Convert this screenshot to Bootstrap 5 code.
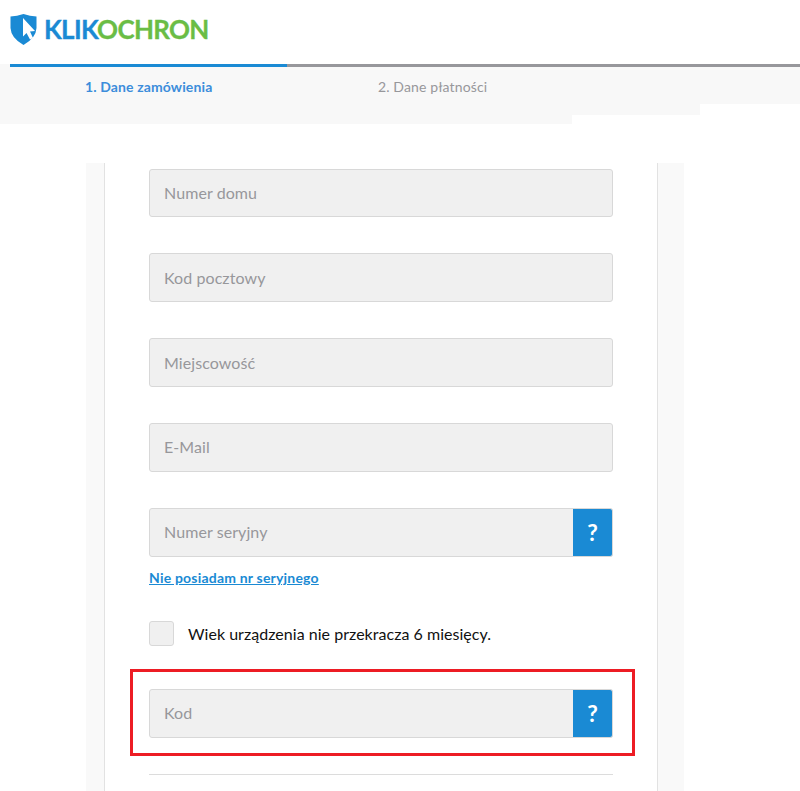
<!DOCTYPE html>
<html lang="pl">
<head>
    <meta charset="UTF-8">
    <title>Klikochron</title>
    <meta name="viewport" content="width=device-width, initial-scale=1">
    <link href="https://cdn.jsdelivr.net/npm/bootstrap@5.3.3/dist/css/bootstrap.min.css" rel="stylesheet">
    <style>
        html, body { height: 791px; overflow: hidden; }
        body { font-family: "Lato", "Liberation Sans", sans-serif; color: #111; background: #fff; }
        .logo-bar { height: 64px; padding: 14px 0 0 10px; }
        .logo-text { font-size: 26px; font-weight: 700; line-height: 31px; letter-spacing: -.7px; margin-left: 7px; -webkit-text-stroke: .3px; }
        .logo-blue { color: #1a8ad4; }
        .logo-green { color: #6abd45; }
        .steps-bar { height: 3px; background: #f8f8f8; padding-left: 10px; }
        .steps-track { height: 3px; background: #97979b; }
        .steps-done { width: 277px; height: 3px; background: #1a8ad4; }
        .band-top { height: 37px; background: #f8f8f8; font-size: 14px; padding-top: 10px; line-height: 20px; letter-spacing: .12px; }
        .step-active { width: 378px; padding-left: 85px; color: #3c8ddb; font-weight: 700; }
        .step-next { color: #97979b; }
        .band-mid { height: 11px; width: 700px; background: #f8f8f8; }
        .band-low { height: 9px; width: 572px; background: #f8f8f8; }
        .side-frame { width: 598px; margin: 39px 0 0 86px; padding: 0 26px 0 18px; background: #f9f9f9; height: 628px; }
        .form-panel { height: 100%; background: #fff; border-left: 1px solid #e2e2e2; border-right: 1px solid #e2e2e2; padding: 5.6px 44px 0 44px; }
        .field-row { margin-bottom: 36px; }
        .field-input.form-control { height: 48.8px; background: #f0f0f0; border: 1px solid #d8d8d8; border-radius: 3px; padding: 0 14px 1px; font-size: 16px; letter-spacing: .08px; color: #333; box-shadow: none; }
        .field-input.form-control::placeholder { color: #97979b; opacity: 1; }
        .help-btn.btn { width: 40px; padding: 0; background: #1a8ad4; border: 1px solid #d8d8d8; border-left: 0; color: #fff; border-radius: 0 3px 3px 0; font-size: 23px; line-height: 1; font-weight: 700; }
        .serial-link { display: block; margin-top: 12.5px; font-size: 14px; font-weight: 700; line-height: 18px; letter-spacing: .2px; color: #1a8ad4; }
        .age-row { margin-top: 33.9px; line-height: 25px; font-size: 16px; letter-spacing: .03px; }
        .age-check.form-check-input { width: 25px; height: 25px; margin: 0 14px 0 0; background-color: #f0f0f0; border: 1px solid #d8d8d8; border-radius: 3px; }
        .code-box { border: 3px solid #ed1c24; margin: 23px -22px 0 -19px; padding: 17px 19px 14px 16px; height: 87px; }
        .panel-rule { border-top: 1px solid #dcdcdc; margin-top: 18px; }
    </style>
</head>
<body>
    <header class="logo-bar d-flex align-items-start">
        <svg width="27" height="31" viewBox="0 0 27 31">
            <path d="M0.5 2.5 Q7 2 13.5 0 Q20 2 26.5 2.5 L26.5 14 Q26 24 13.5 31 Q1 24 0.5 14 Z" fill="#1a8ad4"/>
            <path d="M13 4 L25 17 L20 17.5 L23 24 L20 25.5 L16.5 19 L13 22.5 Z" fill="#fff"/>
        </svg>
        <div class="logo-text"><span class="logo-blue">KLIK</span><span class="logo-green">OCHRON</span></div>
    </header>
    <div class="steps-bar"><div class="steps-track"><div class="steps-done"></div></div></div>
    <div class="band-top d-flex">
        <div class="step-active">1. Dane zamówienia</div>
        <div class="step-next">2. Dane płatności</div>
    </div>
    <div class="band-mid"></div>
    <div class="band-low"></div>

    <div class="side-frame">
        <main class="form-panel">
            <div class="field-row"><input class="form-control field-input" type="text" placeholder="Numer domu"></div>
            <div class="field-row"><input class="form-control field-input" type="text" placeholder="Kod pocztowy"></div>
            <div class="field-row"><input class="form-control field-input" type="text" placeholder="Miejscowość"></div>
            <div class="field-row"><input class="form-control field-input" type="text" placeholder="E-Mail"></div>
            <div class="input-group">
                <input class="form-control field-input" type="text" placeholder="Numer seryjny">
                <button class="btn help-btn" type="button">?</button>
            </div>
            <a class="serial-link" href="#">Nie posiadam nr seryjnego</a>
            <div class="age-row d-flex align-items-center">
                <input class="form-check-input age-check" type="checkbox" id="age">
                <label for="age">Wiek urządzenia nie przekracza 6 miesięcy.</label>
            </div>
            <div class="code-box">
                <div class="input-group">
                    <input class="form-control field-input" type="text" placeholder="Kod">
                    <button class="btn help-btn" type="button">?</button>
                </div>
            </div>
            <div class="panel-rule"></div>
        </main>
    </div>
    <script src="https://cdn.jsdelivr.net/npm/bootstrap@5.3.3/dist/js/bootstrap.bundle.min.js"></script>
</body>
</html>
